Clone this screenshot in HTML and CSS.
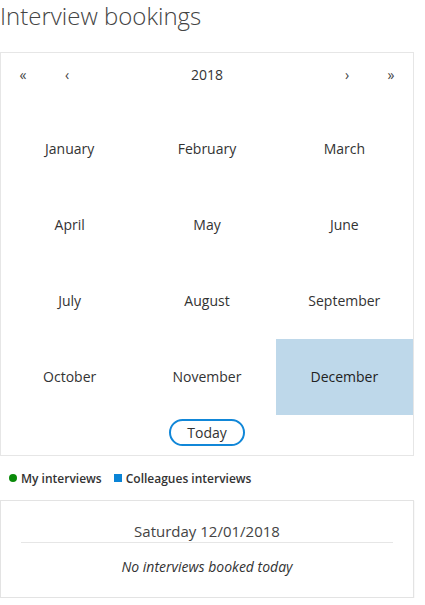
FILE: index.html
```html
<!DOCTYPE html>
<html lang="en">
<head>
<meta charset="utf-8">
<title>Interview bookings</title>
<link rel="stylesheet" href="styles.css">
</head>
<body>
<div class="page">
  <h1 class="title">Interview bookings</h1>
  <div class="calendar">
    <div class="cal-head">
      <span class="nav">«</span>
      <span class="nav">‹</span>
      <span class="year">2018</span>
      <span class="nav">›</span>
      <span class="nav">»</span>
    </div>
    <div class="months">
      <span class="month">January</span>
      <span class="month">February</span>
      <span class="month">March</span>
      <span class="month">April</span>
      <span class="month">May</span>
      <span class="month">June</span>
      <span class="month">July</span>
      <span class="month">August</span>
      <span class="month">September</span>
      <span class="month">October</span>
      <span class="month">November</span>
      <span class="month active">December</span>
    </div>
    <div class="today-row">
      <button class="today">Today</button>
    </div>
  </div>
  <div class="legend">
    <span class="legend-item"><span class="dot"></span>My interviews</span>
    <span class="legend-item"><span class="square"></span>Colleagues interviews</span>
  </div>
  <div class="day-box">
    <div class="day-title">Saturday 12/01/2018</div>
    <div class="day-empty">No interviews booked today</div>
  </div>
</div>
</body>
</html>
```
FILE: styles.css
```css
html, body {
  margin: 0;
  padding: 0;
  background: #fff;
}
body {
  font-family: "Open Sans", "Liberation Sans", sans-serif;
  color: #333;
}
.page {
  width: 414px;
}
.title {
  margin: 0 0 20px 0;
  font-size: 24px;
  line-height: 32px;
  font-weight: 300;
  color: #444;
}
.calendar {
  border: 1px solid #e6e6e6;
  padding-bottom: 9px;
}
.cal-head {
  box-sizing: border-box;
  display: grid;
  grid-template-columns: 44px 44px 1fr 44px 44px;
  height: 44px;
  padding-bottom: 2px;
  align-items: center;
  text-align: center;
  font-size: 14px;
  margin-bottom: 14px;
}
.nav {
  color: #444;
}
.months {
  display: grid;
  grid-template-columns: repeat(3, 1fr);
  grid-auto-rows: 76px;
}
.month {
  box-sizing: border-box;
  display: flex;
  align-items: center;
  justify-content: center;
  padding-bottom: 2px;
  font-size: 14px;
  color: #333;
}
.month.active {
  background: #bed8ea;
  color: #222;
}
.today-row {
  display: flex;
  justify-content: center;
  padding-top: 4px;
}
.today {
  font-family: inherit;
  font-size: 14px;
  color: #333;
  background: #fff;
  border: 2px solid #1187d8;
  border-radius: 14px;
  width: 76px;
  height: 27px;
  padding: 0;
  line-height: 22px;
}
.legend {
  display: flex;
  gap: 12px;
  align-items: center;
  height: 44px;
  padding-left: 9px;
  font-size: 12px;
  font-weight: 600;
  color: #333;
}
.legend-item {
  display: flex;
  align-items: center;
  gap: 4px;
}
.dot {
  width: 8px;
  height: 8px;
  border-radius: 50%;
  background: #0a8a0a;
}
.square {
  width: 8px;
  height: 8px;
  background: #0a84d6;
}
.day-box {
  border: 1px solid #e3e3e3;
  box-shadow: 0 1px 1px #d8d8d8;
  padding: 19px 20px 20px;
  text-align: center;
}
.day-title {
  font-size: 15px;
  line-height: 22px;
  color: #444;
  border-bottom: 1px solid #e6e6e6;
}
.day-empty {
  font-size: 14px;
  font-style: italic;
  line-height: 20px;
  margin-top: 14px;
  color: #333;
}
```
